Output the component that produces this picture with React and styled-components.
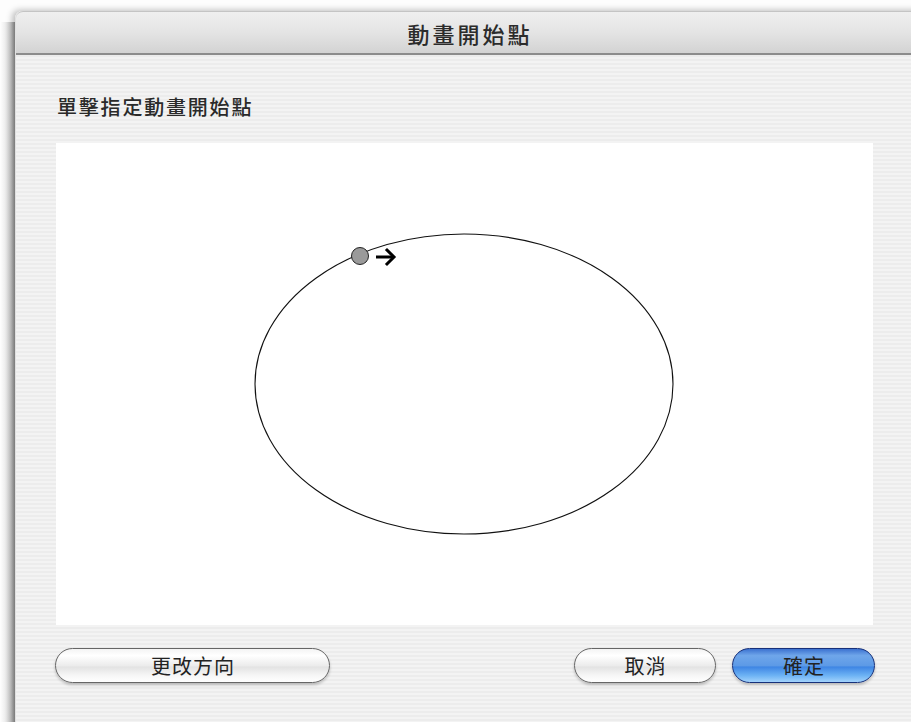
import React from 'react';
import styled, { createGlobalStyle } from 'styled-components';

const GlobalStyle = createGlobalStyle`
  html, body {
    margin: 0;
    padding: 0;
    background: #fdfdfd;
    overflow: hidden;
  }
  body {
    font-family: "Noto Sans CJK TC", "Noto Sans", sans-serif;
  }
`;

const Page = styled.div`
  width: 911px;
  height: 722px;
  padding: 11px 0 0 15px;
  box-sizing: border-box;
  overflow: hidden;
  background: linear-gradient(to right, #ffffff 0px, #eeeeee 5px, #c8c8c8 11px, #9a9a9a 15px);
  background-size: 15px 100%;
  background-repeat: no-repeat;
  background-position: 0 22px;
`;

const Window = styled.div`
  width: 910px;
  height: 730px;
  border-radius: 7px 0 0 0;
  border-left: 1px solid #e0e0e0;
  box-shadow: -3px -1px 6px rgba(0, 0, 0, 0.25);
  background: repeating-linear-gradient(
    to bottom,
    #ececec 0px,
    #ececec 2px,
    #f3f3f3 2px,
    #f3f3f3 4px
  );
  display: flex;
  flex-direction: column;
`;

const TitleBar = styled.div`
  height: 41px;
  border-radius: 7px 0 0 0;
  border-top: 1px solid #c4c4c4;
  border-bottom: 2px solid #8c8c8c;
  background: linear-gradient(to bottom, #efefef 0%, #e4e4e4 50%, #d3d3d3 100%);
  display: flex;
  align-items: center;
  justify-content: center;
  padding: 0 2px 0 0;
  font-size: 22px;
  font-weight: 500;
  color: #2b2b2b;
  letter-spacing: 3px;
`;

const Body = styled.div`
  padding: 39px 0 0 41px;
  display: flex;
  flex-direction: column;
`;

const Prompt = styled.div`
  font-size: 20px;
  font-weight: 500;
  color: #2a2a2a;
  line-height: 26px;
  letter-spacing: 1.8px;
`;

const Canvas = styled.div`
  margin-top: 23px;
  margin-left: -1px;
  width: 817px;
  height: 482px;
  background: #ffffff;
`;

const ButtonRow = styled.div`
  margin-top: 23px;
  width: 820px;
  margin-left: -2px;
  display: flex;
  align-items: center;
`;

const RightButtons = styled.div`
  margin-left: auto;
  display: flex;
  gap: 16px;
`;

const Pill = styled.button`
  width: ${(p) => p.$width}px;
  height: 35px;
  border-radius: 18px;
  font-family: "Noto Sans CJK TC", "Noto Sans", sans-serif;
  font-size: 20px;
  letter-spacing: 1px;
  color: #222;
  padding: 0 0 0 1px;
  border: 1.5px solid ${(p) => (p.$primary ? '#16307a' : '#666666')};
  background: ${(p) =>
    p.$primary
      ? 'linear-gradient(to bottom, #3c72d0 0%, #6fa6ea 20%, #5d9ae6 50%, #3f86e4 55%, #6cb2f4 80%, #a3d3fc 100%)'
      : 'linear-gradient(to bottom, #f4f4f4 0%, #ffffff 20%, #ececec 50%, #e3e3e3 55%, #f6f6f6 80%, #ffffff 100%)'};
  box-shadow: 0 2px 3px rgba(0, 0, 0, 0.22);
`;

const MotionPath = () => (
  <svg width="817" height="482" viewBox="0 0 817 482">
    <ellipse cx="408" cy="241" rx="209" ry="150" fill="none" stroke="#111" strokeWidth="1.1" />
    <circle cx="304" cy="113" r="8.5" fill="#9a9a9a" stroke="#222" strokeWidth="1" />
    <path d="M320 114 H337" stroke="#000" strokeWidth="3" fill="none" />
    <path d="M331 107 L338 114 L331 121" stroke="#000" strokeWidth="3" fill="none" strokeLinecap="square" />
  </svg>
);

export default function App() {
  return (
    <>
      <GlobalStyle />
      <Page>
        <Window>
          <TitleBar>動畫開始點</TitleBar>
          <Body>
            <Prompt>單擊指定動畫開始點</Prompt>
            <Canvas>
              <MotionPath />
            </Canvas>
            <ButtonRow>
              <Pill $width={275}>更改方向</Pill>
              <RightButtons>
                <Pill $width={142}>取消</Pill>
                <Pill $width={143} $primary>確定</Pill>
              </RightButtons>
            </ButtonRow>
          </Body>
        </Window>
      </Page>
    </>
  );
}
